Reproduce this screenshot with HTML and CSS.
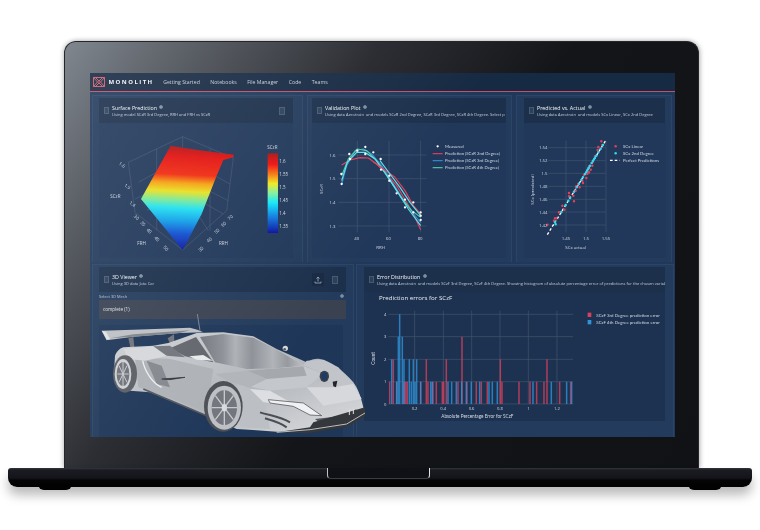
FILE: index.html
```html
<!DOCTYPE html>
<html lang="en">
<head>
  <meta charset="UTF-8" />
  <title>Monolith</title>
  <link rel="stylesheet" href="styles.css">
</head>
<body>
  <div class="laptop">
    <div class="lid">
      <div class="screen">
        <div class="nav">
          <svg class="logo" width="12" height="10" viewBox="0 0 12 10">
            <path d="M.5 .5H11.5V9.5H.5Z M.5 .5L4.5 5L.5 9.5 M11.5 .5L7.5 5L11.5 9.5 M2.5 .5L6 4L9.5 .5 M2.5 9.5L6 6L9.5 9.5 M4.5 5H7.5" fill="none" stroke="#e0606f" stroke-width=".9"/>
          </svg>
          <span class="brand">MONOLITH</span>
          <a>Getting Started</a>
          <a>Notebooks</a>
          <a>File Manager</a>
          <a>Code</a>
          <a>Teams</a>
        </div>

        <div class="row row-top">
          <div class="panel panel-surface">
            <div class="head">
              <span class="doc"></span>
              <div class="titles">
                <h3>Surface Prediction <i class="info"></i></h3>
                <p>Using model SCzR 3rd Degree, RRH and FRH vs SCzR</p>
              </div>
              <span class="doc doc-right"></span>
            </div>
            <svg class="chart" width="194" height="135" viewBox="99 124 194 135">
              <defs>
                <linearGradient id="jet" gradientUnits="userSpaceOnUse" x1="400" y1="335" x2="385" y2="650">
                  <stop offset="0" stop-color="#a81414"/>
                  <stop offset=".1" stop-color="#e01010"/>
                  <stop offset=".28" stop-color="#f02a10"/>
                  <stop offset=".36" stop-color="#f5a010"/>
                  <stop offset=".44" stop-color="#e8e020"/>
                  <stop offset=".53" stop-color="#70e8a0"/>
                  <stop offset=".6" stop-color="#20e0f0"/>
                  <stop offset=".72" stop-color="#10a0e8"/>
                  <stop offset=".84" stop-color="#1050d0"/>
                  <stop offset="1" stop-color="#0a14a0"/>
                </linearGradient>
                <linearGradient id="jetbar" x1="0" y1="0" x2="0" y2="1">
                  <stop offset="0" stop-color="#a81414"/>
                  <stop offset=".14" stop-color="#f01010"/>
                  <stop offset=".27" stop-color="#f58010"/>
                  <stop offset=".38" stop-color="#f0e820"/>
                  <stop offset=".5" stop-color="#80f0a0"/>
                  <stop offset=".62" stop-color="#10e8f8"/>
                  <stop offset=".76" stop-color="#1090e8"/>
                  <stop offset="1" stop-color="#0a10a0"/>
                </linearGradient>
              </defs>
              <g transform="translate(60 35) scale(.3333)">
                <path d="M205 385L368 308L520 372L500 530L368 648L225 535Z M235 445L368 372L510 450 M225 495L368 430L505 500 M368 308V372 M290 345L290 590 M450 345L450 590 M260 530L368 470L445 590 M368 470L490 540" fill="none" stroke="#4d6079" stroke-width="1.5"/>
                <path d="M332 335L415 348L522 362L520 370L490 378L470 425L425 540L368 648L243 495L290 410Z" fill="url(#jet)"/>
                <rect x="623" y="358" width="31" height="239" fill="url(#jetbar)"/>
                <g class="tick3" font-size="13.5">
                  <text x="622" y="346">SCzR</text>
                  <text x="658" y="387">1.6</text>
                  <text x="658" y="426">1.55</text>
                  <text x="658" y="465">1.5</text>
                  <text x="658" y="504">1.45</text>
                  <text x="658" y="543">1.4</text>
                  <text x="658" y="582">1.35</text>
                  <text x="177" y="397" transform="rotate(35 186 392)">1.6</text>
                  <text x="193" y="462" transform="rotate(35 202 457)">1.5</text>
                  <text x="208" y="515" transform="rotate(35 217 510)">1.4</text>
                  <text x="151" y="492">SCzR</text>
                  <text x="222" y="555" transform="rotate(45 230 550)">30</text>
                  <text x="241" y="574" transform="rotate(45 249 569)">35</text>
                  <text x="260" y="596" transform="rotate(45 268 591)">40</text>
                  <text x="283" y="620" transform="rotate(45 291 615)">45</text>
                  <text x="310" y="648" transform="rotate(45 318 643)">50</text>
                  <text x="232" y="634">FRH</text>
                  <text x="415" y="650" transform="rotate(-45 423 645)">30</text>
                  <text x="440" y="622" transform="rotate(-45 448 617)">40</text>
                  <text x="463" y="596" transform="rotate(-45 471 591)">50</text>
                  <text x="483" y="575" transform="rotate(-45 491 570)">60</text>
                  <text x="503" y="555" transform="rotate(-45 511 550)">70</text>
                  <text x="477" y="634">RRH</text>
                </g>
              </g>
            </svg>
          </div>

          <div class="panel panel-valid">
            <div class="head">
              <span class="doc"></span>
              <div class="titles">
                <h3>Validation Plot <i class="info"></i></h3>
                <p>Using data <u>Aerotrain</u> &nbsp;and models SCzR 2nd Degree, SCzR 3rd Degree, SCzR 4th Degree. Select p</p>
              </div>
            </div>
            <svg class="chart" width="194" height="135" viewBox="312 124 194 135">
              <g transform="translate(300 70) scale(.3333)">
                <path class="grid" d="M115 258H380 M115 329H380 M115 400H380 M115 471H380 M172 215V490 M267 215V490 M362 215V490"/>
                <polyline class="ln" stroke="#e0405a" points="125,288 150,273 180,266 205,267 230,285 260,315 290,350 320,400 345,445 362,482"/>
                <polyline class="ln" stroke="#2f8fd0" points="125,345 140,290 165,245 190,240 215,255 245,290 280,345 315,400 345,440 362,460"/>
                <polyline class="ln" stroke="#4fc8a8" points="125,320 145,270 172,240 200,245 230,275 265,325 300,380 335,425 362,445"/>
                <polyline class="ln" stroke="#5fe0f0" points="125,335 142,280 170,250 195,250 225,270 255,312 290,365 325,420 362,470"/>
                <polyline class="ln" stroke="#e0405a" points="220,278 250,300 285,325 315,365 340,410 362,435"/>
                <polyline class="ln" stroke="#5fe0f0" points="240,275 270,315 300,355 330,400 362,440"/>
                <path class="dots" d="M125 345h0M124 315h0M148 255h0M150 270h0M172 245h0M196 234h0M196 255h0M220 250h0M242 270h0M243 302h0M268 320h0M268 335h0M290 373h0M315 392h0M340 400h0M362 430h0M362 440h0M362 453h0M315 415h0M340 430h0"/>
                <path class="dots" d="M413 232h0"/>
                <path class="ln" stroke="#e0405a" d="M398 254H428"/>
                <path class="ln" stroke="#2f8fd0" d="M398 275H428"/>
                <path class="ln" stroke="#4fc8a8" d="M398 296H428"/>
                <g class="tick3 legend" font-size="12.8">
                  <text x="435" y="237">Measured</text>
                  <text x="435" y="258">Prediction (SCzR 2nd Degree)</text>
                  <text x="435" y="279">Prediction (SCzR 3rd Degree)</text>
                  <text x="435" y="300">Prediction (SCzR 4th Degree)</text>
                </g>
                <g class="tick3" font-size="13">
                  <text x="88" y="263">1.6</text>
                  <text x="88" y="334">1.5</text>
                  <text x="88" y="405">1.4</text>
                  <text x="88" y="476">1.3</text>
                  <text x="163" y="513">40</text>
                  <text x="258" y="513">60</text>
                  <text x="353" y="513">80</text>
                  <text x="229" y="541">RRH</text>
                  <text transform="translate(68 375) rotate(-90)">SCzR</text>
                </g>
              </g>
            </svg>
          </div>

          <div class="panel panel-pred">
            <div class="head">
              <span class="doc"></span>
              <div class="titles">
                <h3>Predicted vs. Actual <i class="info"></i></h3>
                <p>Using data <u>Aerotrain</u> &nbsp;and models SCx Linear, SCx 2nd Degree</p>
              </div>
            </div>
            <svg class="chart" width="142" height="135" viewBox="525 124 142 135">
              <g transform="translate(510 70) scale(.3333)">
                <path class="grid" d="M118 236H290 M118 275H290 M118 313H290 M118 352H290 M118 391H290 M118 429H290 M118 468H290 M171 215V490 M231 215V490 M291 215V490"/>
                <path d="M115 497L290 215" stroke="#fff" stroke-width="4" stroke-dasharray="8 6"/>
                <path class="pts" stroke="#e0405a" d="M115 467h0M135 455h0M138 448h0M142 448h0M150 430h0M160 410h0M166 422h0M180 372h0M180 382h0M193 380h0M195 397h0M202 352h0M200 365h0M212 355h0M208 345h0M220 335h0M232 327h0M225 318h0M222 342h0M240 310h0M240 292h0M250 290h0M245 302h0M258 262h0M266 243h0M268 234h0M277 217h0M280 228h0M252 278h0M235 314h0"/>
                <path class="pts" stroke="#2fd8f0" d="M138 460h0M140 466h0M157 429h0M170 408h0M178 395h0M183 387h0M195 368h0M203 355h0M210 344h0M217 333h0M222 325h0M228 315h0M232 309h0M235 304h0M238 298h0M243 290h0M248 282h0M255 271h0M258 266h0M262 260h0M268 250h0M275 239h0M282 228h0M240 296h0M252 275h0"/>
                <path class="pts" stroke="#e0405a" d="M320 232h0"/>
                <path class="pts" stroke="#2fd8f0" d="M320 253h0"/>
                <path d="M303 274H332" stroke="#fff" stroke-width="4" stroke-dasharray="8 6"/>
                <g class="tick3 legend" font-size="13">
                  <text x="342" y="237">SCx Linear</text>
                  <text x="342" y="258">SCx 2nd Degree</text>
                  <text x="342" y="279">Perfect Predictions</text>
                </g>
                <g class="tick3" font-size="13">
                  <text x="90" y="241">1.54</text>
                  <text x="90" y="280">1.52</text>
                  <text x="97" y="318">1.5</text>
                  <text x="90" y="357">1.48</text>
                  <text x="90" y="396">1.46</text>
                  <text x="90" y="434">1.44</text>
                  <text x="90" y="473">1.42</text>
                  <text x="158" y="513">1.45</text>
                  <text x="222" y="513">1.5</text>
                  <text x="278" y="513">1.55</text>
                  <text x="169" y="541">SCx actual</text>
                  <text transform="translate(76 407) rotate(-90)">SCx (predicted)</text>
                </g>
              </g>
            </svg>
          </div>
        </div>

        <div class="row row-bottom">
          <div class="panel panel-viewer">
            <div class="head">
              <span class="doc"></span>
              <div class="titles">
                <h3>3D Viewer <i class="info"></i></h3>
                <p>Using 3D data <u>Jota Car</u></p>
              </div>
              <span class="upload">
                <svg width="8" height="8" viewBox="0 0 8 8"><path d="M4 5.5V1 M2.5 2.5L4 1L5.5 2.5 M1 5.5V7H7V5.5" fill="none" stroke="#9fb0c4" stroke-width=".8"/></svg>
              </span>
              <span class="doc doc-right"></span>
            </div>
            <div class="mesh-label"><span>Select 3D Mesh</span><i class="info"></i></div>
            <div class="mesh-select">complete (1)</div>
            <div class="viewer">
              <!-- the car hangs over the edge of the panel -->
              <svg class="car" width="275" height="177" viewBox="0 0 825 531">
                <defs>
                  <linearGradient id="paint" x1="0" y1="0" x2="1" y2="1">
                    <stop offset="0" stop-color="#cfd2d6"/>
                    <stop offset=".55" stop-color="#b3b6bb"/>
                    <stop offset="1" stop-color="#dcdee1"/>
                  </linearGradient>
                  <linearGradient id="glass" x1="0" y1="0" x2="1" y2="0">
                    <stop offset="0" stop-color="#74787e"/>
                    <stop offset=".22" stop-color="#8d9197"/>
                    <stop offset=".34" stop-color="#aeb1b6"/>
                    <stop offset=".5" stop-color="#8e9298"/>
                    <stop offset=".7" stop-color="#b0b3b8"/>
                    <stop offset=".84" stop-color="#969a9f"/>
                    <stop offset="1" stop-color="#bfc2c6"/>
                  </linearGradient>
                </defs>
                <path d="M322 165L330 215" stroke="#8d9299" stroke-width="2.5"/>
                <path d="M115 238L130 234L133 264L121 264Z M233 238L252 226L253 250L240 254Z" fill="#6f7379"/>
                <path d="M35 215L130 212L300 206L322 212L340 220L270 222L130 233L55 243Z" fill="#bcc0c5"/>
                <path d="M60 238L130 226L300 214L270 222L130 233Z" fill="#80848a"/>
                <path d="M35 215L48 218L60 240L50 244Z" fill="#dfe1e4"/>
                <path d="M75 290C82 275 90 268 100 265L190 260L235 252L320 222L400 220L490 232L560 270L650 310C665 300 680 298 690 300C720 305 760 335 790 370C805 390 815 420 822 455L760 498L660 520L560 518L440 510L350 470L180 400L120 395L85 380L72 340Z" fill="url(#paint)"/>
                <path d="M135 295L240 300L370 330L350 460L180 395L145 385Z" fill="#aeb1b6"/>
                <path d="M100 270L190 262L235 290L165 305L115 300Z" fill="#d5d7da"/>
                <path d="M330 234L400 225L490 236L560 272L642 320L560 328L470 330L375 310Z" fill="url(#glass)"/>
                <path d="M240 268L318 234L370 310L285 292Z" fill="#62666c"/>
                <path d="M298 292L340 288L368 305L320 302Z" fill="#e8eaec"/>
                <path d="M190 262L240 260L285 295L230 290Z" fill="#72767c"/>
                <path d="M170 305L215 320L240 385L200 375Z" fill="#84888e"/>
                <path d="M158 305C165 340 190 375 215 385" fill="none" stroke="#eceeef" stroke-width="4"/>
                <path d="M215 360L285 355L240 362Z" fill="#2b2e33" stroke="#2b2e33" stroke-width="2"/>
                <path d="M375 345L640 320L700 345L650 385L540 395L420 370Z" fill="#c4c7cb"/>
                <path d="M470 335L640 322L650 350L530 360Z" fill="#a5a8ad"/>
                <path d="M375 345L470 335L530 360L480 385L420 370Z" fill="#b1b4b9"/>
                <path d="M640 318L650 305L700 302L745 325L790 375L730 385L690 340Z" fill="#c1c4c8"/>
                <path d="M650 385L730 385L790 375L815 420L700 440Z" fill="#d6d8db"/>
                <path d="M440 375L520 400L540 510L450 505Z" fill="#bcbfc3"/>
                <ellipse cx="703" cy="352" rx="14" ry="17" fill="#3c4046"/>
                <ellipse cx="703" cy="352" rx="9" ry="12" fill="#1e3a66"/>
                <path d="M728 368L742 365L738 385L730 382Z" fill="#22262b"/>
                <path d="M480 390L540 395L620 440L520 430Z" fill="#dcdee1"/>
                <path d="M535 422L640 432L695 470L660 468L610 442L540 432Z" fill="#f0f1f2" stroke="#3c3f44" stroke-width="2"/>
                <path d="M510 460C540 470 570 472 600 490 M525 478C550 485 570 490 590 505" fill="none" stroke="#4b4e54" stroke-width="6"/>
                <path d="M675 480L760 470L800 450L790 465L700 500Z" fill="#55585e"/>
                <path d="M670 490L825 445V472L770 505L660 522L560 520L660 505Z" fill="#34373c"/>
                <path d="M560 520L660 512L770 495L825 462" fill="none" stroke="#d5d7da" stroke-width="2.5"/>
                <path d="M790 450V465 M778 452V468" stroke="#dfe1e4" stroke-width="3"/>
                <circle cx="586" cy="268" r="8" fill="#d6d8db"/>
                <circle cx="584" cy="271" r="4" fill="#555a60"/>
                <path d="M160 390L350 470" stroke="#53565c" stroke-width="5"/>
                <ellipse cx="105" cy="345" rx="36" ry="56" fill="#5b5e64"/>
                <ellipse cx="99" cy="345" rx="25" ry="45" fill="#cdd0d4"/>
                <ellipse cx="99" cy="345" rx="19" ry="36" fill="#6d7077"/>
                <path d="M99 309V381 M82 345H116 M87 320L111 370 M111 320L87 370" stroke="#c8cbcf" stroke-width="3"/>
                <ellipse cx="400" cy="442" rx="58" ry="76" fill="#4c4f55"/>
                <ellipse cx="403" cy="446" rx="50" ry="66" fill="#bdc0c4"/>
                <ellipse cx="403" cy="446" rx="38" ry="52" fill="#72757c"/>
                <path d="M403 394V498 M365 446H441 M376 410L430 482 M430 410L376 482" stroke="#c6c9cd" stroke-width="4"/>
                <ellipse cx="403" cy="446" rx="8" ry="11" fill="#d9dbde"/>
              </svg>
            </div>
          </div>

          <div class="panel panel-error">
            <div class="head">
              <span class="doc"></span>
              <div class="titles">
                <h3>Error Distribution <i class="info"></i></h3>
                <p>Using data <u>Aerotrain</u> &nbsp;and models SCzF 3rd Degree, SCzF 4th Degree. Showing histogram of absolute percentage error of predictions for the chosen variable</p>
              </div>
            </div>
            <svg class="chart chart-error" width="301" height="129" viewBox="365 293 301 129">
              <g transform="translate(350 260) scale(.3333)">
                <path class="grid" d="M118 166H672 M118 233H672 M118 301H672 M118 368H672 M118 435H672 M197 155V435 M283 155V435 M368 155V435 M453 155V435 M538 155V435 M624 155V435"/>
                <path class="bars" stroke="#d8405c" d="M122 435V368M133 435V301M143 435V368M165 435V368M170 435V368M175 435V368M215 435V368M232 435V301M237 435V368M252 435V368M262 435V368M280 435V368M284 435V368M292 435V301M327 435V368M339 435V233M354 435V368M382 435V368M397 435V368M415 435V368M454 435V301M459 435V368M510 435V368M543 435V368M563 435V368M585 435V368M594 435V301M632 435V368M665 435V368"/>
                <path class="bars" stroke="#2f94dc" d="M128 435V301M143 435V368M148 435V233M152 435V166M160 435V233M165 435V301M181 435V301M187 435V368M193 435V301M198 435V368M203 435V301M215 435V368M245 435V368M250 435V368M297 435V368M308 435V368M322 435V368M338 435V368M352 435V368M367 435V368M392 435V368M420 435V368M430 435V368M445 435V368M552 435V368M607 435V368M653 435V368M668 435V368"/>
                <rect class="swatch" x="716" y="161" width="11" height="13" fill="#d8405c"/>
                <rect class="swatch" x="716" y="183" width="11" height="13" fill="#2f94dc"/>
                <text class="plot-title" x="90" y="124" font-size="18.5">Prediction errors for SCzF</text>
                <g class="tick3 legend" font-size="13.2">
                  <text x="742" y="173">SCzF 3rd Degree prediction error</text>
                  <text x="742" y="195">SCzF 4th Degree prediction error</text>
                </g>
                <g class="tick3 legend" font-size="14">
                  <text x="277" y="478">Absolute Percentage Error for SCzF</text>
                  <text transform="translate(77 317) rotate(-90)">Count</text>
                </g>
                <g class="tick3" font-size="12.5">
                  <text x="105" y="171">4</text>
                  <text x="105" y="238">3</text>
                  <text x="105" y="306">2</text>
                  <text x="105" y="373">1</text>
                  <text x="105" y="440">0</text>
                  <text x="188" y="452">0.2</text>
                  <text x="274" y="452">0.4</text>
                  <text x="359" y="452">0.6</text>
                  <text x="444" y="452">0.8</text>
                  <text x="535" y="452">1</text>
                  <text x="615" y="452">1.2</text>
                </g>
              </g>
            </svg>
          </div>
        </div>
        <div class="glare"></div>
      </div>
    </div>
    <div class="base">
      <span class="notch"></span>
      <span class="foot foot-left"></span>
      <span class="foot foot-right"></span>
    </div>
  </div>
</body>
</html>
```

FILE: styles.css
```css
body {
  font-family: "Open Sans", sans-serif;
  background-color: #ffffff;
  margin: 0;
  height: 530px;
  overflow: hidden;
}

.laptop {
  width: 744px;
  margin: 41px 0 0 8px;
}

.lid {
  box-sizing: border-box;
  width: 635px;
  height: 427px;
  margin-left: 56px;
  padding: 32px 23px 31px 26px;
  border-radius: 12px 12px 0 0;
  border: 1px solid #24262b;
  border-bottom: none;
  background: linear-gradient(125deg, #80878f 0, #5b5f66 14%, #2c2e33 34%, #141519 55%, #111216 100%);
  box-shadow: 1px 0 5px rgba(0, 0, 0, 0.25), -1px 0 5px rgba(0, 0, 0, 0.15);
}

.screen {
  position: relative;
  height: 364px;
  margin: -1px 0 0 -1px;
  background-color: #22385a;
  display: flex;
  flex-direction: column;
  color: #c9d2dd;
  filter: blur(0.3px);
}

.nav {
  display: flex;
  align-items: center;
  gap: 10.5px;
  height: 18px;
  flex: none;
  padding-left: 3px;
  background-color: #172a43;
  border-bottom: 1px solid #c2506a;
  font-size: 5.2px;
  color: #c4ced9;
}

.logo {
  margin-right: -7px;
}

.brand {
  font-size: 6px;
  font-weight: 700;
  letter-spacing: 1.45px;
  color: #f0f3f6;
  margin-right: -1px;
}

.row {
  display: flex;
  padding: 3px 1px 0 2px;
}

.row-top {
  gap: 4px;
  height: 167px;
  flex: none;
}

.row-bottom {
  gap: 2px;
  padding-top: 2px;
  flex: 1;
}

.panel {
  position: relative;
  box-sizing: border-box;
  background-color: #233b5c;
  border: 1px solid #2b4566;
  border-bottom: none;
  display: flex;
  flex-direction: column;
}

.panel-surface { width: 211px; padding: 2px 9px 0 6px; }
.panel-valid { width: 205px; padding: 2px 5px 0 4px; }
.panel-pred { width: 156px; padding: 2px 6px 0 7px; }
.panel-viewer { width: 263px; padding: 2px 7px 0 6px; z-index: 1; }
.panel-error { width: 318px; padding: 2px 8px 0 7px; }

.head {
  display: flex;
  align-items: center;
  flex: none;
  height: 25px;
  padding-left: 5px;
  background-color: #1c304c;
  overflow: hidden;
}

.titles {
  flex: 1;
  min-width: 0;
  margin-left: 3px;
}

h3 {
  margin: 0;
  font-size: 5.3px;
  font-weight: 400;
  line-height: 7px;
  color: #f4f6f8;
}

.titles p {
  margin: 0;
  font-size: 4.05px;
  line-height: 5px;
  color: #c4ced9;
  white-space: nowrap;
  overflow: hidden;
}

.info {
  display: inline-block;
  width: 4px;
  height: 4px;
  margin-left: 1px;
  border-radius: 50%;
  border: 1px solid #6e7f93;
  background-color: #8495a8;
  box-sizing: border-box;
  vertical-align: 1px;
}

.doc {
  flex: none;
  box-sizing: border-box;
  width: 5px;
  height: 7px;
  border: 1px solid #465a74;
  background-color: #2c4159;
}

.doc-right {
  width: 6px;
  height: 8px;
  margin: 0 8px 0 8px;
}

.upload {
  display: flex;
  align-items: center;
  justify-content: center;
  width: 12px;
  height: 13px;
  background-color: #182a43;
}

.chart {
  display: block;
  flex: none;
  background-color: #21385a;
}

.chart-error {
  background-color: #1d3250;
}

.chart text {
  font-family: "Open Sans", sans-serif;
}

.chart .legend text {
  font-family: Lato, sans-serif;
}

.tick3 {
  fill: #d3dbe4;
}

.plot-title {
  fill: #e9edf1;
}

.grid {
  fill: none;
  stroke: #41566f;
  stroke-width: 2;
}

.ln {
  fill: none;
  stroke-width: 3.5;
  stroke-linejoin: round;
}

.dots {
  stroke: #ffffff;
  stroke-width: 7;
  stroke-linecap: round;
}

.pts {
  fill: none;
  stroke-width: 7.5;
  stroke-linecap: round;
}

.bars {
  fill: none;
  stroke-width: 4.5;
  opacity: 0.78;
}

.mesh-label {
  display: flex;
  justify-content: space-between;
  align-items: center;
  height: 8px;
  font-size: 3.95px;
  color: #b8c4d2;
  padding-right: 2px;
}

.mesh-select {
  box-sizing: border-box;
  height: 19px;
  padding-left: 4px;
  line-height: 18px;
  font-size: 4.6px;
  color: #e0e4e9;
  background-color: #3a4252;
}

.viewer {
  position: relative;
  flex: 1;
  margin: 6px 3px 0 0;
  background-color: #1e3658;
  border-radius: 2px 2px 0 0;
}

.car {
  position: absolute;
  left: -9px;
  top: -66px;
}

.glare {
  position: absolute;
  inset: 0;
  z-index: 2;
  background: linear-gradient(125deg, rgba(255, 255, 255, 0.11) 0, rgba(255, 255, 255, 0.06) 25%, rgba(255, 255, 255, 0) 48%);
  pointer-events: none;
}

.base {
  position: relative;
  height: 19px;
  border-radius: 3px 3px 9px 9px;
  background: linear-gradient(#33363e 0, #1a1c22 2px, #14151a 10px, #050506 12px, #020203 100%);
  box-shadow: 0 8px 11px rgba(0, 0, 0, 0.27);
}

.notch {
  position: absolute;
  left: 319px;
  top: 0;
  width: 103px;
  height: 11px;
  box-sizing: border-box;
  background-color: #101116;
  border-radius: 0 0 4px 4px;
  border: 1px solid #3a3c42;
  border-top: none;
  border-left-color: #c0c2c6;
  border-right-color: #e4e5e7;
}

.foot {
  position: absolute;
  bottom: -3px;
  width: 34px;
  height: 6px;
  border-radius: 0 0 12px 12px;
  background-color: #020203;
}

.foot-left { left: 30px; }
.foot-right { right: 30px; }
```
